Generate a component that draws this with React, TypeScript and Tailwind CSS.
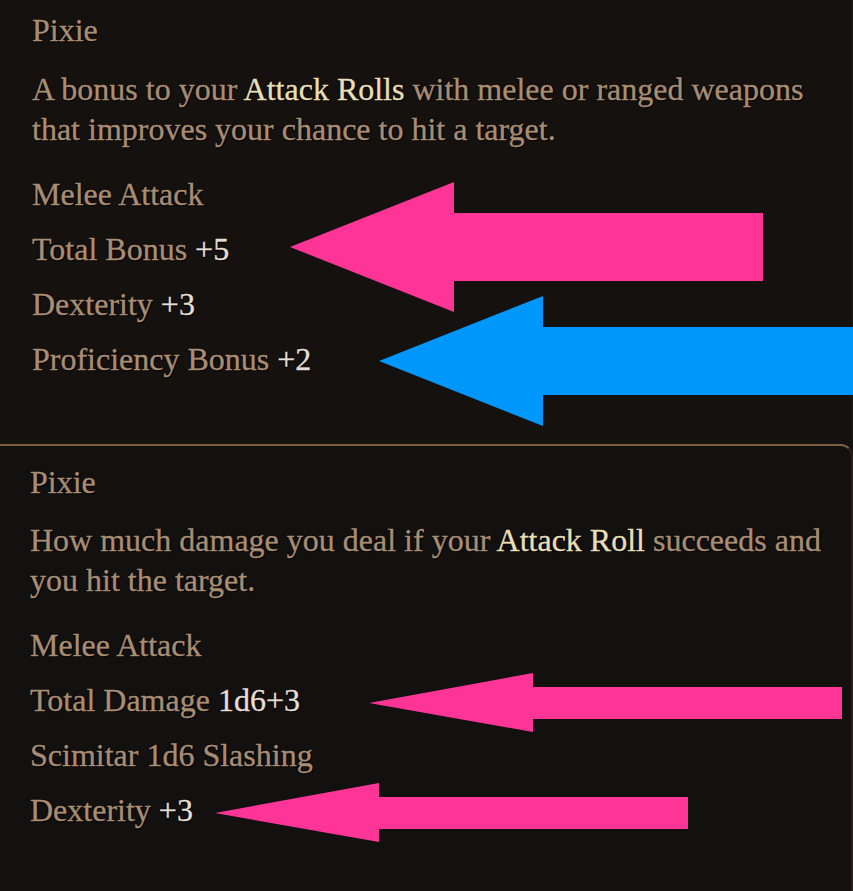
import React from "react";

function Label({ children }: { children: React.ReactNode }) {
  return <div className="h-[40px] leading-[40px] whitespace-nowrap">{children}</div>;
}

function Num({ children }: { children: React.ReactNode }) {
  return <span className="text-[#e4ded3]">{children}</span>;
}

function Hi({ children }: { children: React.ReactNode }) {
  return <span className="text-[#e8dfb6]">{children}</span>;
}

export default function App() {
  return (
    <div className="relative w-[853px] h-[891px] overflow-hidden bg-[#131110] font-['Liberation_Serif','DejaVu_Serif',serif] text-[32px] text-[#a98d73] [-webkit-text-stroke:0.35px_currentColor] [text-shadow:0_0_2px_#000,1px_1px_1px_#000]">
      {/* Top tooltip */}
      <div className="h-[444px] bg-[#15110f] pl-[32px] pt-[10px] border-r border-[#1e1a17]">
        <Label>Pixie</Label>
        <div className="mt-[19px] leading-[40px] whitespace-nowrap">
          <div>
            A bonus to your <Hi>Attack Rolls</Hi> with melee or ranged weapons
          </div>
          <div>that improves your chance to hit a target.</div>
        </div>
        <div className="mt-[25px] flex flex-col gap-[15px]">
          <Label>Melee Attack</Label>
          <Label>
            Total Bonus <Num>+5</Num>
          </Label>
          <Label>
            Dexterity <Num>+3</Num>
          </Label>
          <Label>
            Proficiency Bonus <Num>+2</Num>
          </Label>
        </div>
      </div>

      {/* Bottom tooltip */}
      <div className="h-[447px] bg-[#131110] border-t-2 border-r-2 border-t-[#7d5f44] border-r-[#2a1f19] rounded-tr-[12px] pl-[30px] pt-[16px]">
        <Label>Pixie</Label>
        <div className="mt-[18px] leading-[40px] whitespace-nowrap">
          <div>
            How much damage you deal if your <Hi>Attack Roll</Hi> succeeds and
          </div>
          <div>you hit the target.</div>
        </div>
        <div className="mt-[25px] flex flex-col gap-[15px]">
          <Label>Melee Attack</Label>
          <Label>
            Total Damage <Num>1d6+3</Num>
          </Label>
          <Label>Scimitar 1d6 Slashing</Label>
          <Label>
            Dexterity <Num>+3</Num>
          </Label>
        </div>
      </div>

      {/* Annotation arrows */}
      <svg
        className="absolute inset-0 pointer-events-none"
        width="853"
        height="891"
        viewBox="0 0 853 891"
      >
        <polygon
          points="290,247 454,182 454,213 763,213 763,281 454,281 454,312"
          fill="#ff3497"
        />
        <polygon
          points="379,361 543,296 543,327 853,327 853,395 543,395 543,426"
          fill="#0097fd"
        />
        <polygon
          points="369,703 533,673 533,687 842,687 842,719 533,719 533,732"
          fill="#ff3497"
        />
        <polygon
          points="215,813 379,783 379,797 688,797 688,829 379,829 379,842"
          fill="#ff3497"
        />
      </svg>
    </div>
  );
}
